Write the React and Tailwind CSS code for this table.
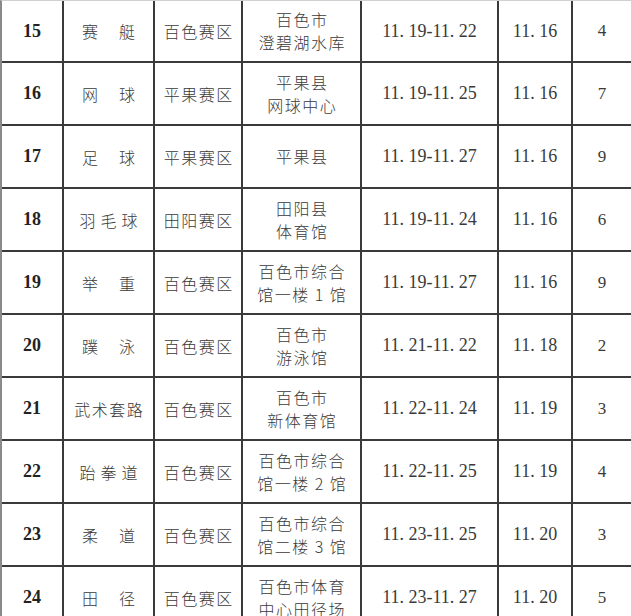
import React from "react";

const rows = [
  ["15", ["赛", "艇"], "百色赛区", ["百色市", "澄碧湖水库"], "11. 19-11. 22", "11. 16", "4"],
  ["16", ["网", "球"], "平果赛区", ["平果县", "网球中心"], "11. 19-11. 25", "11. 16", "7"],
  ["17", ["足", "球"], "平果赛区", ["平果县"], "11. 19-11. 27", "11. 16", "9"],
  ["18", "羽毛球", "田阳赛区", ["田阳县", "体育馆"], "11. 19-11. 24", "11. 16", "6"],
  ["19", ["举", "重"], "百色赛区", ["百色市综合", "馆一楼 1 馆"], "11. 19-11. 27", "11. 16", "9"],
  ["20", ["蹼", "泳"], "百色赛区", ["百色市", "游泳馆"], "11. 21-11. 22", "11. 18", "2"],
  ["21", "武术套路", "百色赛区", ["百色市", "新体育馆"], "11. 22-11. 24", "11. 19", "3"],
  ["22", "跆拳道", "百色赛区", ["百色市综合", "馆一楼 2 馆"], "11. 22-11. 25", "11. 19", "4"],
  ["23", ["柔", "道"], "百色赛区", ["百色市综合", "馆二楼 3 馆"], "11. 23-11. 25", "11. 20", "3"],
  ["24", ["田", "径"], "百色赛区", ["百色市体育", "中心田径场"], "11. 23-11. 27", "11. 20", "5"],
];

const cjk = { fontFamily: '"Noto Sans CJK SC", "Noto Sans", sans-serif' };
const serif = { fontFamily: '"Liberation Serif", "DejaVu Serif", serif' };

export default function App() {
  return (
    <div className="w-[631px] h-[616px] overflow-hidden bg-white text-[#3a3a3a]">
      <div className="border-l-2 border-[#8a8a8a] border-t border-t-[#d0d0d0]">
        {rows.map(([no, sport, area, venue, dates, arrive, count], i) => (
          <div
            key={no}
            className={`grid grid-cols-[62px_91px_88px_119px_137px_74px_1fr] border-b-2 border-[#3a3a3a] ${
              i === 0 ? "h-[62px]" : "h-[63px]"
            }`}
          >
            {/* 序号 */}
            <div className="flex items-center justify-center border-r-2 border-[#3a3a3a]">
              <span style={serif} className="text-[18px] font-bold text-[#222]">{no}</span>
            </div>

            {/* 项目 */}
            <div style={cjk} className="flex items-center justify-center border-r-2 border-[#3a3a3a] text-[16px] font-light">
              {Array.isArray(sport) ? (
                <span className="flex gap-[21px]">
                  <span>{sport[0]}</span>
                  <span>{sport[1]}</span>
                </span>
              ) : (
                <span className={sport.length === 3 ? "tracking-[5px] pl-[5px]" : "tracking-[1.5px] pl-[1.5px]"}>{sport}</span>
              )}
            </div>

            {/* 赛区 */}
            <div style={cjk} className="flex items-center justify-center border-r-2 border-[#3a3a3a] text-[16px] font-light">
              <span className="tracking-[1.5px] pl-[1.5px]">{area}</span>
            </div>

            {/* 场馆 */}
            <div style={cjk} className="flex flex-col items-center justify-center border-r-2 border-[#3a3a3a] text-[16px] font-light leading-[23px]">
              {venue.map((v) => (
                <span key={v} className="tracking-[1.5px] pl-[1.5px]">{v}</span>
              ))}
            </div>

            {/* 比赛时间 */}
            <div className="flex items-center justify-center border-r-2 border-[#3a3a3a]">
              <span style={serif} className="text-[18px] whitespace-pre">{dates}</span>
            </div>

            {/* 报到时间 */}
            <div className="flex items-center justify-center border-r-2 border-[#3a3a3a]">
              <span style={serif} className="text-[18px] whitespace-pre">{arrive}</span>
            </div>

            {/* 数量 */}
            <div className="flex items-center justify-center">
              <span style={serif} className="text-[17px]">{count}</span>
            </div>
          </div>
        ))}
      </div>
    </div>
  );
}
